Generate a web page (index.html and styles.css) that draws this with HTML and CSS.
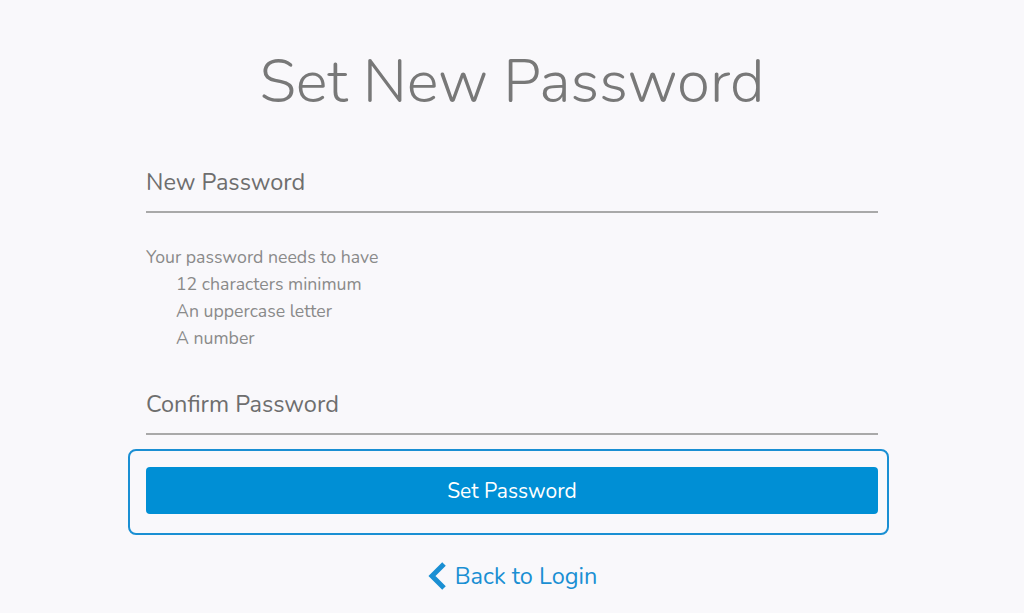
FILE: index.html
```html
<!DOCTYPE html>
<html>
<head>
  <meta charset="UTF-8">
  <title>Set New Password</title>
  <link rel="stylesheet" href="styles.css">
</head>
<body>

  <main class="page">
    <h1 class="title">Set New Password</h1>

    <form class="reset-form" autocomplete="off">
      <input class="field first" type="password" name="newPassword" placeholder="New Password">

      <div class="rules">
        <p>Your password needs to have</p>
        <ul>
          <li>12 characters minimum</li>
          <li>An uppercase letter</li>
          <li>A number</li>
        </ul>
      </div>

      <input class="field" type="password" name="confirmPassword" placeholder="Confirm Password">

      <div class="submit-wrap">
        <button type="submit" class="submit">Set Password</button>
      </div>
    </form>

    <a class="back" href="#">
      <svg width="20" height="30" viewBox="0 0 20 30">
        <path d="M17 3 L5 15 L17 27" fill="none" stroke="#1a8fd3" stroke-width="5"/>
      </svg>
      Back to Login
    </a>
  </main>

</body>
</html>
```

FILE: styles.css
```css
/* page */
body {
  margin: 0;
  background: #f9f8fb;
  font-family: "Nunito", "Lato", "Open Sans", sans-serif;
  color: #7a7a7a;
}

.page {
  width: 732px;
  margin: 0 auto;
  display: flex;
  flex-direction: column;
  align-items: center;
}

.title {
  margin: 42px 0 0;
  font-size: 60px;
  font-weight: 300;
  line-height: 80px;
  color: #787878;
}

/* form */
.reset-form {
  width: 100%;
  display: flex;
  flex-direction: column;
}

.field {
  box-sizing: border-box;
  width: 100%;
  height: 52px;
  margin-top: 31px;
  padding: 0 0 8px;
  border: none;
  border-bottom: 2px solid #a9a9a9;
  background: transparent;
  font-family: inherit;
  font-size: 23.5px;
  color: #555;
  outline: none;
}

.field.first {
  margin-top: 39px;
}

.field::placeholder {
  color: #6e6e6e;
}

.rules {
  margin-top: 31px;
  font-size: 17.7px;
  line-height: 27px;
  color: #8a8a8a;
}

.rules p {
  margin: 0;
}

.rules ul {
  margin: 0;
  padding-left: 30px;
  list-style: none;
}

.submit-wrap {
  margin: 14px -11px 0 -18px;
  padding: 16px 9px 19px 16px;
  border: 2px solid #1a8fd3;
  border-radius: 8px;
}

.submit {
  width: 100%;
  height: 47px;
  border: none;
  border-radius: 4px;
  background: #008fd5;
  color: #fff;
  font-family: inherit;
  font-size: 21px;
  cursor: pointer;
}

/* back link */
.back {
  margin-top: 25px;
  display: flex;
  align-items: center;
  gap: 8px;
  font-size: 23.5px;
  color: #1a8fd3;
  text-decoration: none;
}
```
